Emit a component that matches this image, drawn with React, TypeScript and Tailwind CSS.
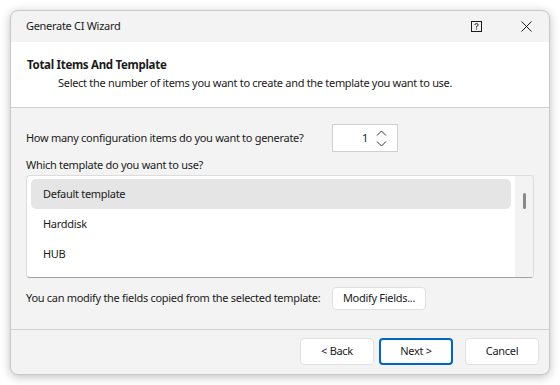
import React from "react";

const items = ["Default template", "Harddisk", "HUB"];

function Btn({ children, primary }: { children: React.ReactNode; primary?: boolean }) {
  return (
    <button
      className={
        primary
          ? "w-[74px] h-[27px] rounded-[4px] bg-white border-2 border-[#0067c0] text-[11px] tracking-[-0.3px] text-[#1b1b1b]"
          : "w-[74px] h-[27px] rounded-[4px] bg-white border border-[#e0e0e0] text-[11px] tracking-[-0.3px] text-[#1b1b1b]"
      }
    >
      {children}
    </button>
  );
}

export default function App() {
  return (
    <div
      className="w-[560px] h-[385px] bg-white p-[10px]"
      style={{ fontFamily: '"Noto Sans", "Liberation Sans", sans-serif' }}
    >
      <div className="w-[540px] h-[365px] flex flex-col rounded-[8px] overflow-hidden bg-[#f3f3f3] border border-[#c8c8c8] shadow-[0_2px_10px_rgba(0,0,0,0.25)] text-[#1b1b1b] whitespace-nowrap text-[11px] tracking-[-0.3px]">
        {/* title bar */}
        <div className="h-[31px] flex items-center pl-[15px] shrink-0">
          <span className="flex-1">Generate CI Wizard</span>
          <div className="w-[46px] flex justify-center mr-[4px]">
            <svg width="11" height="11" viewBox="0 0 11 11">
              <rect x="0.5" y="0.5" width="10" height="10" fill="none" stroke="#1b1b1b" />
              <path d="M3.8 4 Q3.8 2.6 5.5 2.6 Q7.2 2.6 7.2 3.9 Q7.2 4.8 5.5 5.4 V6.6" fill="none" stroke="#1b1b1b" />
              <rect x="5" y="7.6" width="1" height="1" fill="#1b1b1b" />
            </svg>
          </div>
          <div className="w-[46px] flex justify-center">
            <svg width="11" height="11" viewBox="0 0 11 11">
              <path d="M0.5 0.5 L10.5 10.5 M10.5 0.5 L0.5 10.5" stroke="#1b1b1b" strokeWidth="1" />
            </svg>
          </div>
        </div>

        {/* header */}
        <div className="h-[66px] bg-white border-b border-[#d0d0d0] shrink-0 pl-[16px] pt-[14px]">
          <div className="text-[11.5px] font-bold leading-[18px] tracking-[-0.3px]">Total Items And Template</div>
          <div className="leading-[17px] pl-[31px]">
            Select the number of items you want to create and the template you want to use.
          </div>
        </div>

        {/* body */}
        <div className="flex-1 px-[15px] pt-[16px] border-b border-[#d0d0d0]">
          <div className="flex items-center h-[28px]">
            <span className="w-[306px]">How many configuration items do you want to generate?</span>
            <div className="w-[66px] h-[28px] bg-white border border-[#d0d0d0] flex items-center justify-end pr-[10px] gap-[8px]">
              <span>1</span>
              <div className="flex flex-col gap-[5px]">
                <svg width="11" height="6" viewBox="0 0 11 6">
                  <path d="M1 5.5 L5.5 1 L10 5.5" fill="none" stroke="#333" />
                </svg>
                <svg width="11" height="6" viewBox="0 0 11 6">
                  <path d="M1 0.5 L5.5 5 L10 0.5" fill="none" stroke="#333" />
                </svg>
              </div>
            </div>
          </div>
          <div className="mt-[4px] leading-[17px]">Which template do you want to use?</div>
          <div className="mt-[2px] w-[508px] h-[103px] bg-white border border-[#dcdcdc] border-b-[#a0a0a0] rounded-[4px] flex overflow-hidden">
            <div className="flex-1 pl-[4px] pr-[4px] pt-[3px]">
              {items.map((t, i) => (
                <div
                  key={t}
                  className={
                    i === 0
                      ? "h-[30px] flex items-center pl-[12px] bg-[#e5e5e5] rounded-[5px]"
                      : "h-[30px] flex items-center pl-[12px]"
                  }
                >
                  {t}
                </div>
              ))}
            </div>
            <div className="w-[18px] bg-[#f3f3f3] flex justify-center pt-[17px]">
              <div className="w-[3px] h-[16px] bg-[#8a8a8a] rounded-full" />
            </div>
          </div>
          <div className="flex items-center mt-[9px] h-[22px]">
            <span className="w-[306px]">You can modify the fields copied from the selected template:</span>
            <button className="w-[94px] h-[23px] bg-white border border-[#e0e0e0] rounded-[4px]">
              Modify Fields...
            </button>
          </div>
        </div>

        {/* footer */}
        <div className="h-[44px] shrink-0 flex items-start justify-end pt-[8px] pr-[10px] gap-[5px]">
          <Btn>&lt; Back</Btn>
          <Btn primary>Next &gt;</Btn>
          <div className="w-[2px]" />
          <Btn>Cancel</Btn>
        </div>
      </div>
    </div>
  );
}
